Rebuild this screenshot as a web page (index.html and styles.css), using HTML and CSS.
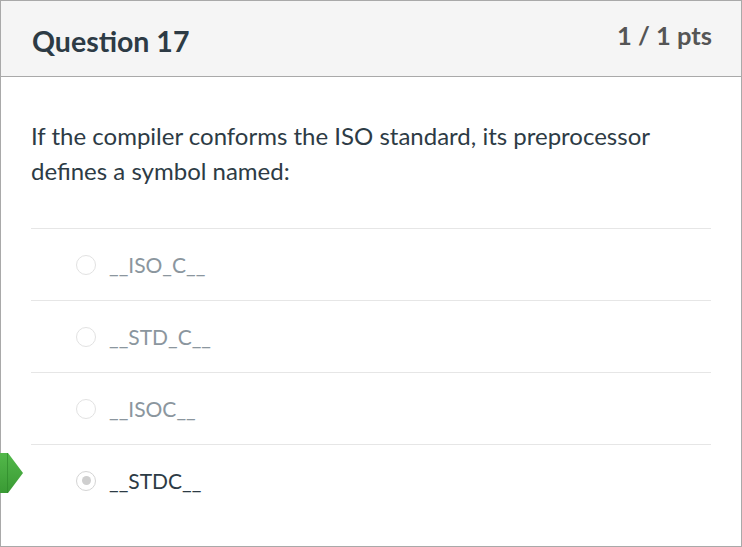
FILE: index.html
```html
<!DOCTYPE html>
<html>
<head>
<meta charset="utf-8">
<link rel="stylesheet" href="styles.css">
</head>
<body>
<div class="question">
  <div class="q-header">
    <h2 class="q-title">Question 17</h2>
    <div class="q-points">1 / 1 pts</div>
  </div>
  <div class="q-body">
    <p class="q-text">If the compiler conforms the ISO standard, its preprocessor defines a symbol named:</p>
    <div class="answers">
      <div class="answer">
        <span class="radio"></span>
        <span class="label">__ISO_C__</span>
      </div>
      <div class="answer">
        <span class="radio"></span>
        <span class="label">__STD_C__</span>
      </div>
      <div class="answer">
        <span class="radio"></span>
        <span class="label">__ISOC__</span>
      </div>
      <div class="answer selected">
        <svg class="marker" width="23" height="40" viewBox="0 0 23 40">
          <defs>
            <linearGradient id="g" x1="0" y1="0" x2="0" y2="1">
              <stop offset="0" stop-color="#52b84a"/>
              <stop offset="1" stop-color="#3a9a34"/>
            </linearGradient>
          </defs>
          <polygon points="0,0 8,0 23,20 8,40 0,40" fill="url(#g)"/>
          <line x1="7.5" y1="0" x2="7.5" y2="40" stroke="#2f8a2c" stroke-width="1" opacity="0.7"/>
        </svg>
        <span class="radio checked"></span>
        <span class="label">__STDC__</span>
      </div>
    </div>
  </div>
</div>
</body>
</html>
```

FILE: styles.css
```css
html, body {
  margin: 0;
  padding: 0;
  background: #fff;
}
body {
  font-family: Lato, "Open Sans", sans-serif;
  color: #2d3b45;
}
.question {
  box-sizing: border-box;
  width: 742px;
  height: 547px;
  border: 1px solid #a9a9a9;
  position: relative;
}
.q-header {
  box-sizing: border-box;
  height: 76px;
  background: #f5f5f5;
  border-bottom: 1px solid #a9a9a9;
  display: flex;
  justify-content: space-between;
  align-items: flex-start;
  padding: 0 29px 0 31px;
}
.q-title {
  margin: 0;
  padding-top: 22px;
  font-size: 28.5px;
  font-weight: 700;
  line-height: 36px;
  color: #2d3b45;
}
.q-points {
  padding-top: 17px;
  font-size: 25.5px;
  font-weight: 700;
  line-height: 34px;
  color: #555;
}
.q-body {
  padding: 0 30px;
}
.q-text {
  margin: 0;
  padding-top: 41px;
  padding-bottom: 40px;
  font-size: 24px;
  line-height: 35px;
}
.answer {
  position: relative;
  box-sizing: border-box;
  height: 72px;
  border-top: 1px solid #e6e6e6;
  display: flex;
  align-items: center;
  padding-left: 45px;
}
.radio {
  box-sizing: border-box;
  width: 20px;
  height: 20px;
  border-radius: 50%;
  border: 1px solid #e2e2e2;
  margin-right: 13px;
  position: relative;
  background: #fff;
}
.radio.checked {
  border-color: #d4d4d4;
}
.radio.checked::after {
  content: "";
  position: absolute;
  left: 4.5px;
  top: 4.5px;
  width: 9px;
  height: 9px;
  border-radius: 50%;
  background: #cfcfcf;
}
.label {
  font-size: 21px;
  color: #8b969e;
}
.selected .label {
  color: #2d3b45;
}
.marker {
  position: absolute;
  left: -31px;
  top: 8px;
}
```
